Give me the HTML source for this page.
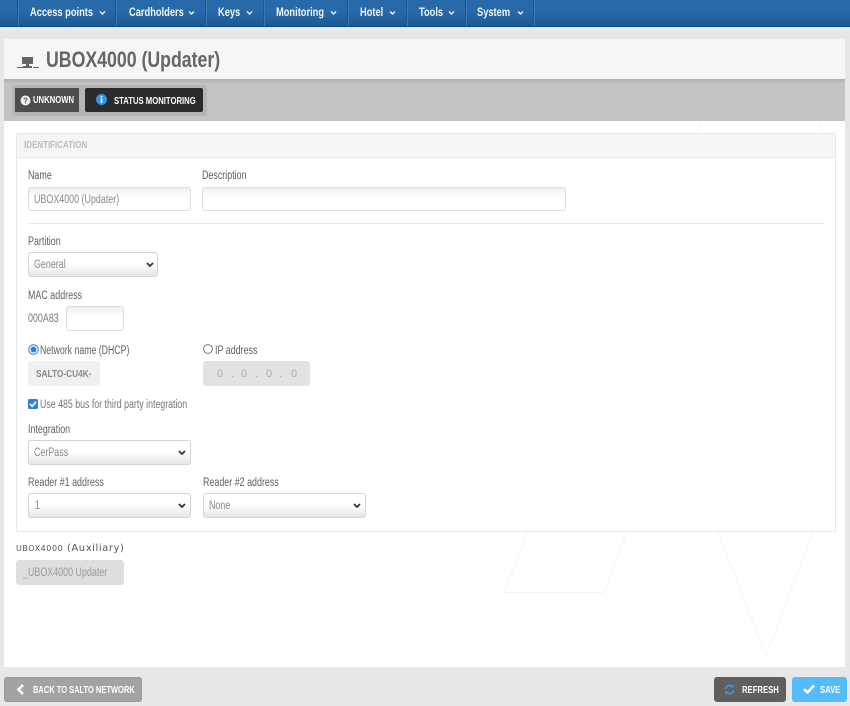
<!DOCTYPE html>
<html><head><meta charset="utf-8"><style>
html,body{margin:0;padding:0}
body{width:850px;height:706px;position:relative;overflow:hidden;background:#e7e7e7;font-family:"Liberation Sans",sans-serif;color:#666}
.a{position:absolute;box-sizing:border-box}
.t{position:absolute;white-space:nowrap;transform-origin:0 50%;transform:scaleX(.775);font-size:11.5px;line-height:14px;color:#5f5f5f}
.nav{left:0;top:0;width:850px;height:27px;background:linear-gradient(#2769a9 0,#2769a9 45%,#1b5a92 100%);border-bottom:1px solid #0f4a7a}
.sep{top:0;width:2px;height:26px;background:#3c79b0;border-left:1px solid #1c588e}
.n{color:#f2f6fa;font-size:12px;font-weight:bold;top:5px;transform:scaleX(.775)}
.inp{background:linear-gradient(#eee,#fff 40%);border:1px solid #ddd;border-radius:3px}
.sel{background:linear-gradient(#fff 45%,#e6e6e6);border:1px solid #d4d4d4;border-radius:3px}
.dis{background:#f0f0f0;border-radius:3px}
.b{font-weight:bold;color:#fff;font-size:10px;transform:scaleX(.77)}
.v{color:#888}
.o{color:#aaa;font-size:11px;transform:none;top:367px}
</style></head><body>
<div class="a nav"></div>
<div class="a sep" style="left:17px"></div><div class="a sep" style="left:115px"></div><div class="a sep" style="left:205px"></div><div class="a sep" style="left:263px"></div><div class="a sep" style="left:347px"></div><div class="a sep" style="left:406px"></div><div class="a sep" style="left:465px"></div><div class="a sep" style="left:533px"></div>
<span class="t n" style="left:30px">Access points</span><span class="t n" style="left:129px">Cardholders</span><span class="t n" style="left:218px">Keys</span><span class="t n" style="left:276px">Monitoring</span><span class="t n" style="left:360px">Hotel</span><span class="t n" style="left:419px">Tools</span><span class="t n" style="left:477px">System</span>
<svg class="a" style="left:0;top:0" width="850" height="27" fill="none" stroke="#e8eef5" stroke-width="1.5"><path d="M100 11.500l2.500 2.500 2.500-2.500M189 11.500l2.500 2.500 2.500-2.500M247 11.500l2.500 2.500 2.500-2.500M331 11.500l2.500 2.500 2.500-2.500M390 11.500l2.500 2.500 2.500-2.500M449 11.500l2.500 2.500 2.500-2.500M518 11.500l2.500 2.500 2.500-2.500"/></svg>

<div class="a" style="left:4px;top:39px;width:841px;height:628px;background:#fff"></div>
<svg class="a" style="left:4px;top:121px" width="841" height="546" fill="none" stroke="#f5f5f5"><path d="M524 411L500 471.500h100l23-60.500M714 411l48 124 47-124M692 15l4-12M820 15l-4-12"/></svg>
<div class="a" style="left:4px;top:39px;width:841px;height:40px;background:#f6f6f6"></div>
<svg class="a" style="left:17px;top:57px" width="22" height="12"><path fill="#666" d="M5 0h11v7h-4v2h3v2H6V9h3V7H5z"/><path stroke="#666" fill="none" d="M0 10.500h6M16 10.500h6"/></svg>
<span class="t" style="left:46px;top:48px;font-size:22px;line-height:24px;font-weight:bold;color:#666;transform:scaleX(.805)">UBOX4000 (Updater)</span>
<div class="a" style="left:4px;top:79px;width:841px;height:42px;background:linear-gradient(#b0b0b0,#c4c4c4 5px)"></div>
<div class="a" style="left:12px;top:85px;width:195px;height:31px;background:#b5b5b5;border-radius:3px"></div>
<div class="a" style="left:15px;top:88px;width:64px;height:24px;background:#4d4d4d"></div>
<svg class="a" style="left:20px;top:95px" width="11" height="11"><circle cx="5.500" cy="5.500" r="5" fill="#f2f2f2"/><text x="5.500" y="8.500" font-size="8" font-weight="bold" text-anchor="middle" fill="#555" font-family="Liberation Sans">?</text></svg>
<span class="t b" style="left:33px;top:94px">UNKNOWN</span>
<div class="a" style="left:85px;top:88px;width:118px;height:24px;background:#2b2b2b;border-radius:2px"></div>
<svg class="a" style="left:96px;top:94px" width="11" height="11"><circle cx="5.500" cy="5.500" r="5.500" fill="#2f97e4"/><path fill="#fff" d="M4.700 2h1.600v1.500H4.700zM4.700 4.500h1.600V9H4.700z"/></svg>
<span class="t b" style="left:114px;top:95px">STATUS MONITORING</span>

<div class="a" style="left:16px;top:133px;width:820px;height:399px;background:#fff;border:1px solid #e8e8e8;border-radius:2px"></div>
<div class="a" style="left:17px;top:134px;width:818px;height:24px;background:#f5f5f5;border-bottom:1px solid #eaeaea"></div>
<span class="t" style="left:24px;top:138px;color:#bbb;font-size:10.500px;font-weight:bold;transform:scaleX(.76)">IDENTIFICATION</span>

<span class="t" style="left:28px;top:169px">Name</span>
<div class="a inp" style="left:28px;top:187px;width:163px;height:24px"></div>
<span class="t v" style="left:34px;top:193px">UBOX4000 (Updater)</span>
<span class="t" style="left:202px;top:169px">Description</span>
<div class="a inp" style="left:202px;top:187px;width:364px;height:24px"></div>
<div class="a" style="left:28px;top:223px;width:796px;height:1px;background:#e8e8e8"></div>

<span class="t" style="left:28px;top:235px">Partition</span>
<div class="a sel" style="left:28px;top:252px;width:130px;height:25px"></div>
<span class="t v" style="left:34px;top:258px">General</span>

<span class="t" style="left:28px;top:289px">MAC address</span>
<span class="t" style="left:28px;top:312px;color:#777">000A83</span>
<div class="a inp" style="left:66px;top:306px;width:58px;height:25px"></div>

<svg class="a" style="left:28px;top:344px" width="11" height="11"><circle cx="5.500" cy="5.500" r="4.800" fill="#fff" stroke="#2f7fe0"/><circle cx="5.500" cy="5.500" r="3" fill="#2f7fe0"/></svg>
<span class="t" style="left:40px;top:344px;transform:scaleX(.76)">Network name (DHCP)</span>
<div class="a dis" style="left:28px;top:361px;width:72px;height:25px"></div>
<span class="t" style="left:36px;top:368px;color:#888;font-weight:bold;font-size:10px;transform:scaleX(.83)">SALTO-CU4K-</span>
<svg class="a" style="left:203px;top:344px" width="10" height="10"><circle cx="5" cy="5" r="4.400" fill="#fff" stroke="#777"/></svg>
<span class="t" style="left:215px;top:344px">IP address</span>
<div class="a" style="left:203px;top:361px;width:107px;height:25px;background:#e2e2e2;border-radius:3px"></div>
<span class="t o" style="left:217px">0</span><span class="t o" style="left:231px">.</span><span class="t o" style="left:241px">0</span><span class="t o" style="left:255px">.</span><span class="t o" style="left:266px">0</span><span class="t o" style="left:279px">.</span><span class="t o" style="left:291px">0</span>

<svg class="a" style="left:28px;top:399px" width="10" height="10"><rect width="10" height="10" rx="1.500" fill="#2f7fe0"/><path d="M2 5l2.200 2.300L8 2.800" fill="none" stroke="#fff" stroke-width="1.600"/></svg>
<span class="t" style="left:40px;top:398px;color:#777;transform:scaleX(.765)">Use 485 bus for third party integration</span>

<span class="t" style="left:28px;top:423px">Integration</span>
<div class="a sel" style="left:28px;top:440px;width:163px;height:25px"></div>
<span class="t v" style="left:34px;top:446px">CerPass</span>

<span class="t" style="left:28px;top:476px">Reader #1 address</span>
<div class="a sel" style="left:28px;top:493px;width:163px;height:25px"></div>
<span class="t v" style="left:35px;top:499px">1</span>
<span class="t" style="left:203px;top:476px">Reader #2 address</span>
<div class="a sel" style="left:203px;top:493px;width:163px;height:25px"></div>
<span class="t v" style="left:209px;top:499px">None</span>
<svg class="a" style="left:0;top:0" width="400" height="520" fill="none" stroke="#333" stroke-width="1.800"><path d="M147 263l3 3 3-3M179 451l3 3 3-3M179 504l3 3 3-3M354 504l3 3 3-3"/></svg>

<span class="t" style="left:16px;top:542px;font-size:10px;color:#555;letter-spacing:.55px;transform:none;font-family:'DejaVu Sans',sans-serif"><span style="font-size:8px">UBOX4000</span> (Auxiliary)</span>
<div class="a" style="left:16px;top:560px;width:108px;height:25px;background:#dedede;border-radius:3px"></div>
<span class="t" style="left:23px;top:566px;color:#999">_UBOX4000 Updater</span>

<div class="a" style="left:4px;top:677px;width:138px;height:25px;background:#a3a3a3;border:1px solid #999;border-radius:3px"></div>
<svg class="a" style="left:16px;top:684px" width="9" height="11"><path d="M7 1L2.500 5.500 7 10" fill="none" stroke="#fff" stroke-width="2.600"/></svg>
<span class="t b" style="left:33px;top:684px;transform:scaleX(.75)">BACK TO SALTO NETWORK</span>
<div class="a" style="left:714px;top:677px;width:72px;height:25px;background:#5f5f5f;border-radius:3px"></div>
<svg class="a" style="left:724px;top:684px" width="11" height="11" fill="none" stroke="#3b9be6" stroke-width="1.600"><path d="M1.500 5a4 4 0 0 1 7-2.200M9.500 6a4 4 0 0 1-7 2.200"/><path fill="#3b9be6" stroke="none" d="M7 3.500l3-.5-.5-2.500zM4 7.500l-3 .5.500 2.500z"/></svg>
<span class="t b" style="left:742px;top:684px">REFRESH</span>
<div class="a" style="left:792px;top:677px;width:55px;height:25px;background:#55bcfb;border-radius:3px"></div>
<svg class="a" style="left:803px;top:684px" width="12" height="10"><path d="M1 5l3.500 3.500L11 1.500" fill="none" stroke="#fff" stroke-width="2.400"/></svg>
<span class="t b" style="left:820px;top:684px">SAVE</span>
</body></html>
